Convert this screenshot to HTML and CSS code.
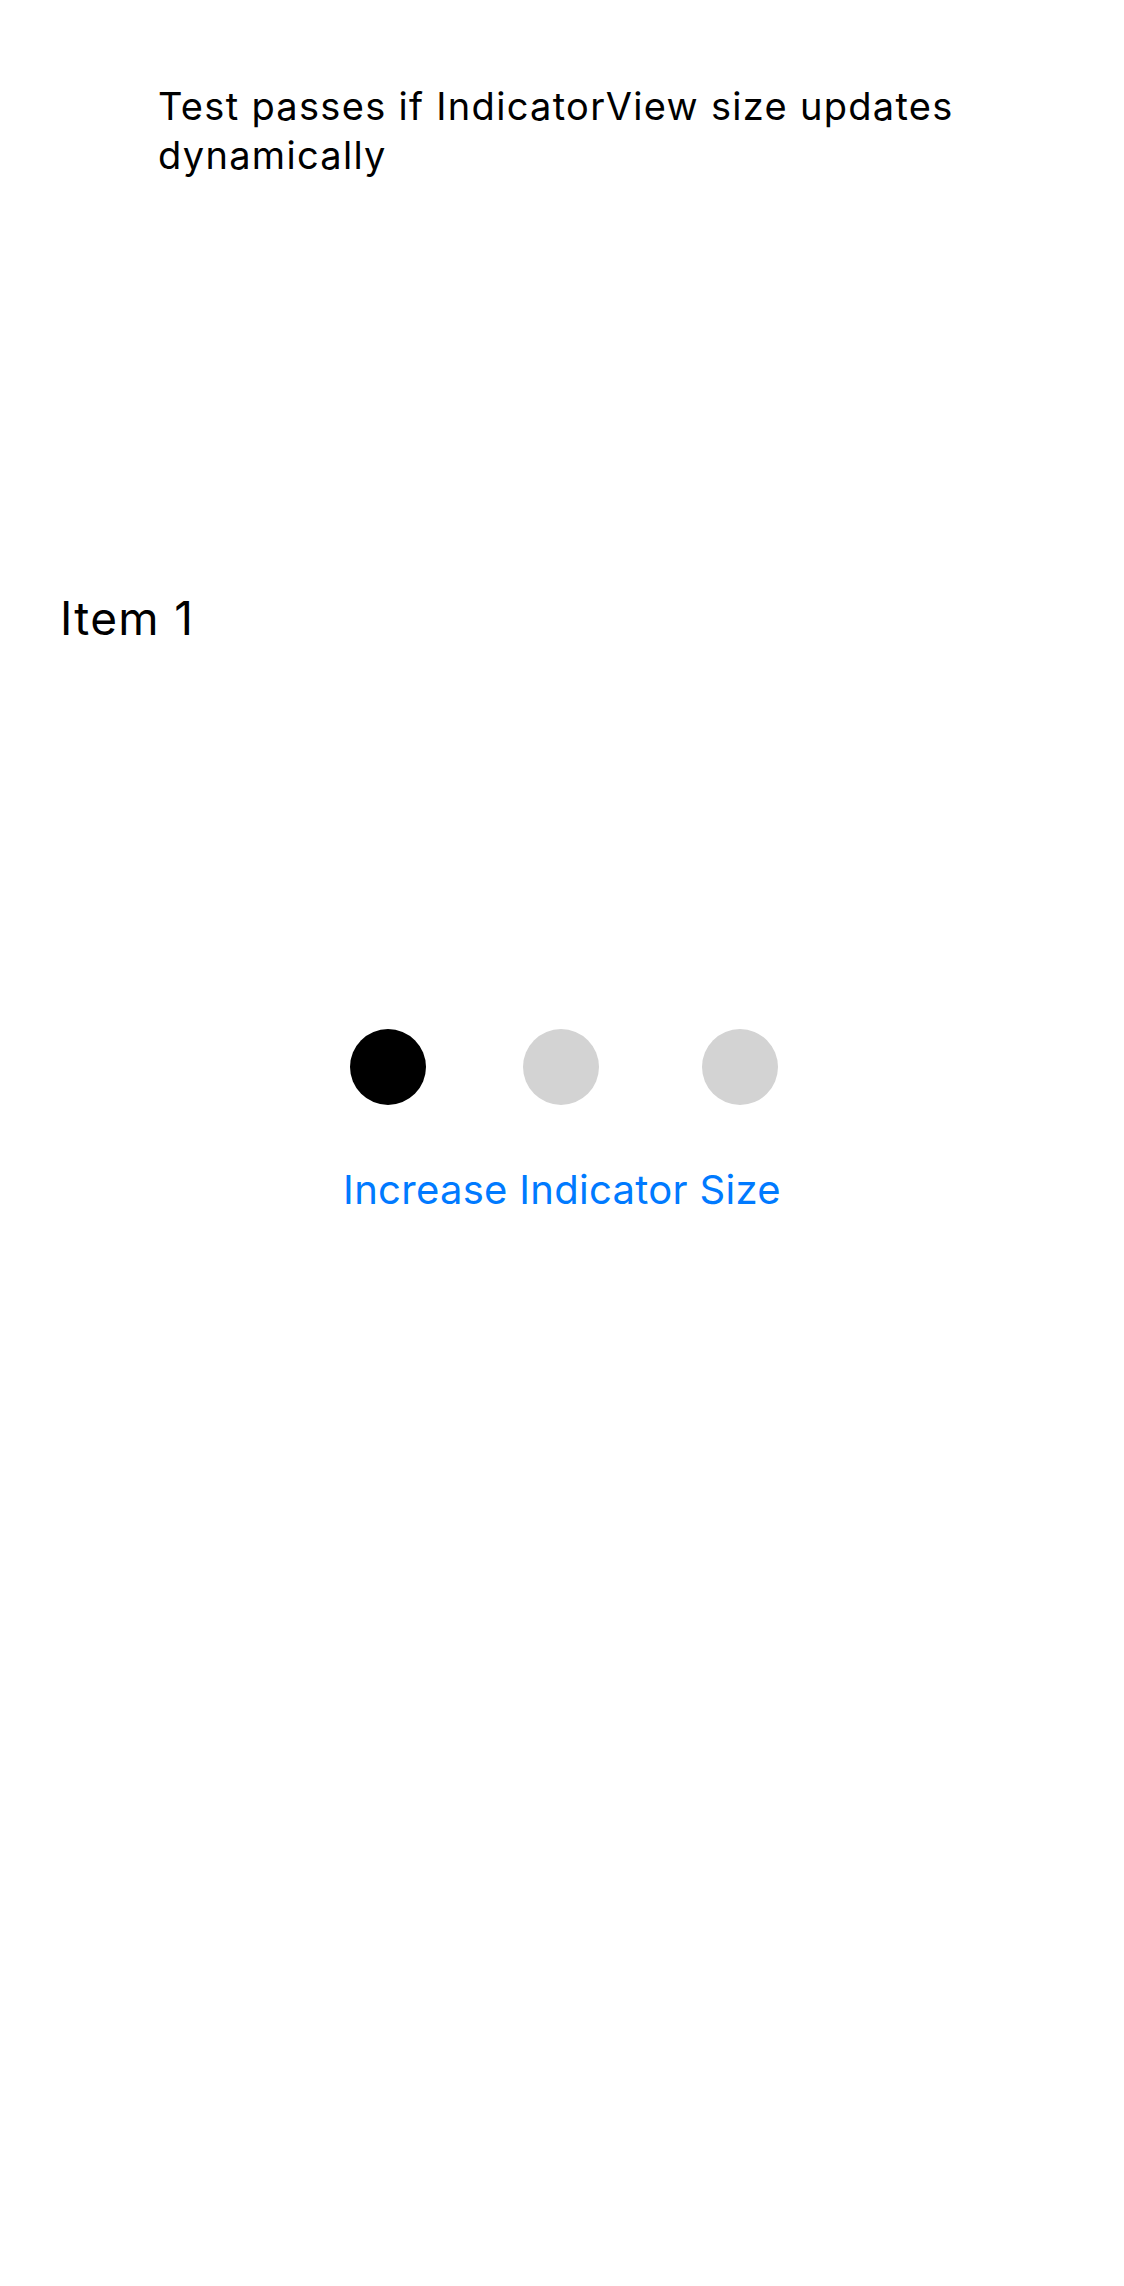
FILE: index.html
```html
<!DOCTYPE html>
<html lang="en">
<head>
<meta charset="utf-8">
<title>IndicatorView test</title>
<link rel="stylesheet" href="styles.css">
</head>
<body>
<main class="screen">
  <p class="instructions">Test passes if IndicatorView size updates<br>dynamically</p>
  <div class="carousel-item">Item 1</div>
  <div class="indicators">
    <span class="dot dot-active"></span>
    <span class="dot dot-second"></span>
    <span class="dot dot-third"></span>
  </div>
  <div class="action-row">
    <button class="link-button" type="button">Increase Indicator Size</button>
  </div>
</main>
</body>
</html>
```
FILE: styles.css
```css
html, body {
  margin: 0;
  padding: 0;
  background: #ffffff;
}

.screen {
  width: 1124px;
  min-height: 2286px;
  font-family: Inter, "Liberation Sans", sans-serif;
  color: #000000;
  display: flex;
  flex-direction: column;
}

.instructions {
  margin: 82px 0 0 0;
  padding-left: 158px;
  font-size: 38px;
  line-height: 49px;
  letter-spacing: 1.3px;
}

.carousel-item {
  margin-top: 412px;
  padding-left: 60px;
  font-size: 46px;
  line-height: 52px;
  letter-spacing: 1.3px;
}

.indicators {
  margin-top: 385px;
  display: flex;
  justify-content: center;
  align-items: center;
  padding-left: 3px;
}

.dot {
  width: 76px;
  height: 76px;
  border-radius: 50%;
  background: #d3d3d3;
}

.dot-active {
  background: #000000;
}

.dot-second {
  margin-left: 97px;
}

.dot-third {
  margin-left: 103px;
}

.action-row {
  margin-top: 60px;
  display: flex;
  justify-content: center;
}

.link-button {
  border: none;
  background: none;
  padding: 0;
  font-family: Inter, "Liberation Sans", sans-serif;
  font-size: 40px;
  line-height: 50px;
  letter-spacing: 0.3px;
  color: #007aff;
}
```
